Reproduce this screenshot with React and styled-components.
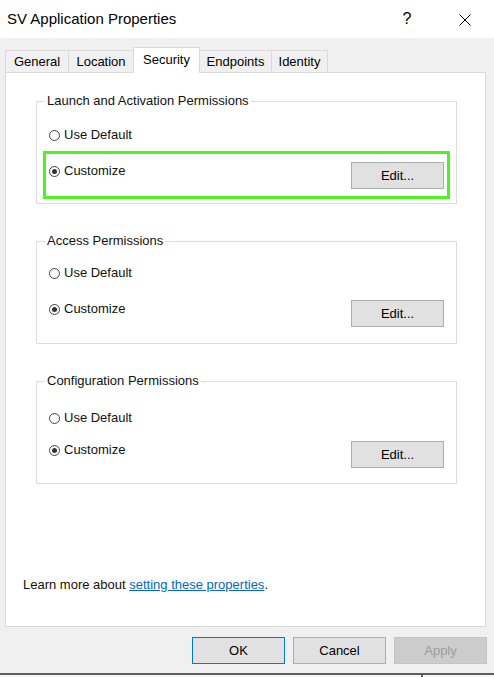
import React from "react";
import styled, { createGlobalStyle } from "styled-components";

const Global = createGlobalStyle`
  html, body { margin: 0; padding: 0; background: #f0f0f0; }
  body {
    font-family: "Liberation Sans", Arial, sans-serif;
    font-size: 13px;
    color: #000;
  }
`;

const Window = styled.div`
  width: 494px;
  height: 677px;
  display: flex;
  flex-direction: column;
  background: #f0f0f0;
  overflow: hidden;
`;

const TitleBar = styled.div`
  height: 38px;
  flex: none;
  background: #fff;
  display: flex;
  align-items: center;
  padding-left: 7px;
`;

const Title = styled.div`
  flex: 1;
  font-size: 15px;
  line-height: 38px;
  color: #000;
`;

const HelpGlyph = styled.div`
  width: 20px;
  text-align: center;
  font-size: 16px;
  line-height: 38px;
  margin-right: 42px;
`;

const CloseGlyph = styled.svg`
  width: 12px;
  height: 12px;
  margin-right: 23px;
  margin-top: 1px;
`;

const Body = styled.div`
  flex: 1;
  display: flex;
  flex-direction: column;
  padding: 9px 0 0 5px;
`;

const TabStrip = styled.div`
  display: flex;
  align-items: flex-end;
  height: 26px;
  margin-bottom: -1px;
  position: relative;
  z-index: 1;
`;

const Tab = styled.div`
  box-sizing: border-box;
  width: ${(p) => p.$w}px;
  height: ${(p) => (p.$active ? 26 : 22)}px;
  margin-bottom: ${(p) => (p.$active ? 0 : 1)}px;
  margin-left: ${(p) => (p.$first ? 0 : -1)}px;
  border: 1px solid #d9d9d9;
  border-bottom: none;
  background: ${(p) => (p.$active ? "#fff" : "#f0f0f0")};
  display: flex;
  align-items: center;
  justify-content: center;
  padding-bottom: ${(p) => (p.$active ? 2 : 0)}px;
  font-size: 13px;
  position: relative;
  z-index: ${(p) => (p.$active ? 2 : 1)};
`;

const Panel = styled.div`
  box-sizing: border-box;
  width: 481px;
  height: 555px;
  border: 1px solid #d9d9d9;
  background: #fff;
  display: flex;
  flex-direction: column;
`;

const Group = styled.div`
  box-sizing: border-box;
  position: relative;
  width: 421px;
  height: 103px;
  margin-left: 30px;
  margin-top: ${(p) => p.$top}px;
  border: 1px solid #dcdcdc;
  display: flex;
  flex-direction: column;
`;

const Legend = styled.span`
  position: absolute;
  top: -9px;
  left: 8px;
  padding: 0 2px;
  background: #fff;
  line-height: 16px;
  color: #111;
`;

const RadioRow = styled.label`
  display: flex;
  align-items: center;
  gap: 4px;
  height: 16px;
  line-height: 16px;
  margin-left: ${(p) => p.$inset}px;
  margin-top: ${(p) => p.$top}px;
  color: #111;
`;

const RadioCircle = styled.span`
  box-sizing: border-box;
  width: 11px;
  height: 11px;
  border-radius: 50%;
  border: 1px solid #444;
  background: #fff;
  display: grid;
  place-items: center;
  flex: none;

  &::after {
    content: "";
    width: 5px;
    height: 5px;
    border-radius: 50%;
    background: ${(p) => (p.$checked ? "#333" : "transparent")};
  }
`;

const ActionBox = styled.div`
  box-sizing: border-box;
  height: 48px;
  margin: ${(p) => p.$gap}px 6px 0;
  border: 3px solid ${(p) => (p.$highlight ? "#4cf61a" : "transparent")};
  padding: 0 3px;
  display: flex;
  align-items: flex-start;
  justify-content: space-between;
`;

const Button = styled.button`
  box-sizing: border-box;
  width: 93px;
  height: 27px;
  margin: 0;
  padding: 0;
  font-family: "Liberation Sans", Arial, sans-serif;
  font-size: 13px;
  color: ${(p) => (p.$disabled ? "#9d9d9d" : "#000")};
  background: ${(p) => (p.$disabled ? "#cccccc" : "#e1e1e1")};
  border: 1px solid
    ${(p) => (p.$primary ? "#0078d7" : p.$disabled ? "#c4c4c4" : "#adadad")};
  margin-top: ${(p) => p.$top || 0}px;
`;

const LearnMore = styled.div`
  margin-top: auto;
  padding: 0 0 33px 17px;
  line-height: 16px;
  color: #111;
`;

const Link = styled.a`
  color: #0066cc;
  text-decoration: underline;
`;

const Footer = styled.div`
  box-sizing: border-box;
  height: 46px;
  display: flex;
  justify-content: flex-end;
  align-items: flex-start;
  gap: 8px;
  padding: 10px 7px 0 0;
`;

const BottomEdge = styled.div`
  box-sizing: border-box;
  height: 4px;
  border-top: 2px solid #5f5f5f;
  background: #f7f7f7;
  padding-left: 421px;
`;

const Tick = styled.div`
  width: 2px;
  height: 2px;
  background: #5f5f5f;
`;

const tabs = [
  { label: "General", w: 64 },
  { label: "Location", w: 66 },
  { label: "Security", w: 67, active: true },
  { label: "Endpoints", w: 73 },
  { label: "Identity", w: 57 },
];

const groups = [
  { title: "Launch and Activation Permissions", top: 28, first: 25, gap: 8, highlight: true },
  { title: "Access Permissions", top: 37, first: 23, gap: 8 },
  { title: "Configuration Permissions", top: 37, first: 28, gap: 4 },
];

export default function App() {
  return (
    <Window>
      <Global />
      <TitleBar>
        <Title>SV Application Properties</Title>
        <HelpGlyph>?</HelpGlyph>
        <CloseGlyph viewBox="0 0 12 12">
          <path d="M0.5 0.5 L11.5 11.5 M11.5 0.5 L0.5 11.5" stroke="#000" strokeWidth="1" fill="none" />
        </CloseGlyph>
      </TitleBar>
      <Body>
        <TabStrip>
          {tabs.map((t, i) => (
            <Tab key={t.label} $w={t.w} $active={t.active} $first={i === 0}>
              {t.label}
            </Tab>
          ))}
        </TabStrip>
        <Panel>
          {groups.map((g) => (
            <Group key={g.title} $top={g.top}>
              <Legend>{g.title}</Legend>
              <RadioRow $inset={12} $top={g.first}>
                <RadioCircle />
                Use Default
              </RadioRow>
              <ActionBox $gap={g.gap} $highlight={g.highlight}>
                <RadioRow $inset={0} $top={9}>
                  <RadioCircle $checked />
                  Customize
                </RadioRow>
                <Button $top={8}>Edit...</Button>
              </ActionBox>
            </Group>
          ))}
          <LearnMore>
            Learn more about <Link href="#">setting these properties</Link>.
          </LearnMore>
        </Panel>
        <Footer>
          <Button $primary>OK</Button>
          <Button>Cancel</Button>
          <Button $disabled>Apply</Button>
        </Footer>
      </Body>
      <BottomEdge>
        <Tick />
      </BottomEdge>
    </Window>
  );
}
